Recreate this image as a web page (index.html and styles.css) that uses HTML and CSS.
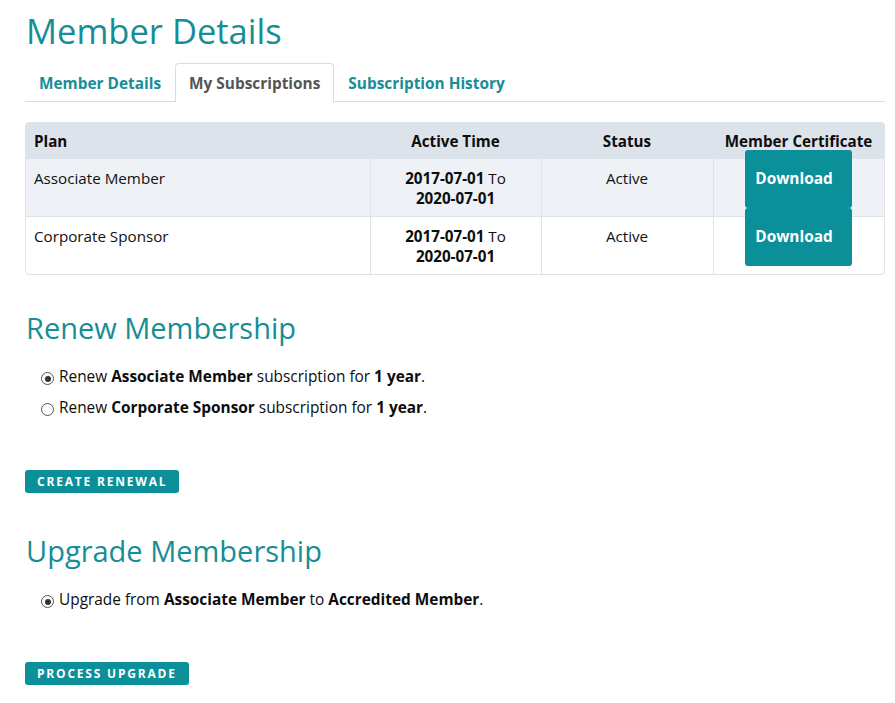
FILE: index.html
```html
<!DOCTYPE html>
<html>
<head>
<meta charset="utf-8">
<link rel="stylesheet" href="styles.css">
</head>
<body>
<div class="page">
  <h1 class="title">Member Details</h1>
  <ul class="tabs">
    <li class="tab">Member Details</li>
    <li class="tab active">My Subscriptions</li>
    <li class="tab">Subscription History</li>
  </ul>

  <div class="table-wrap">
    <table class="subs">
      <thead>
        <tr>
          <th class="c-plan">Plan</th>
          <th class="c-time">Active Time</th>
          <th class="c-status">Status</th>
          <th class="c-cert">Member Certificate</th>
        </tr>
      </thead>
      <tbody>
        <tr class="odd">
          <td class="c-plan">Associate Member</td>
          <td class="c-time"><b>2017-07-01</b> To <b>2020-07-01</b></td>
          <td class="c-status">Active</td>
          <td class="c-cert"><span class="dl">Download</span></td>
        </tr>
        <tr>
          <td class="c-plan">Corporate Sponsor</td>
          <td class="c-time"><b>2017-07-01</b> To <b>2020-07-01</b></td>
          <td class="c-status">Active</td>
          <td class="c-cert"><span class="dl">Download</span></td>
        </tr>
      </tbody>
    </table>
  </div>

  <h2 class="section renew">Renew Membership</h2>
  <div class="options">
    <label class="opt"><span class="radio on"></span> Renew <b>Associate Member</b> subscription for <b>1 year</b>.</label>
    <label class="opt"><span class="radio"></span> Renew <b>Corporate Sponsor</b> subscription for <b>1 year</b>.</label>
  </div>
  <div class="btn-row"><span class="btn">Create Renewal</span></div>

  <h2 class="section upgrade">Upgrade Membership</h2>
  <div class="options">
    <label class="opt"><span class="radio on"></span> Upgrade from <b>Associate Member</b> to <b>Accredited Member</b>.</label>
  </div>
  <div class="btn-row up"><span class="btn">Process Upgrade</span></div>
</div>
</body>
</html>
```

FILE: styles.css
```css
* { box-sizing: border-box; }
html, body { margin: 0; padding: 0; background: #fff; }
body {
  font-family: "Open Sans", "DejaVu Sans", sans-serif;
  color: #111;
  font-size: 15.2px;
}
.page { padding: 0 10px 0 25px; }
.title {
  margin: 0;
  padding-top: 8px;
  font-size: 34.5px;
  font-weight: 400;
  line-height: 45px;
  color: #178d96;
  padding-left: 1px;
}
.tabs {
  list-style: none;
  margin: 10px 0 0 0;
  padding: 0;
  display: flex;
  border-bottom: 1px solid #dcdcdc;
  height: 39px;
}
.tab {
  padding: 0 13px;
  font-weight: 700;
  font-size: 15.4px;
  line-height: 39px;
  color: #178d96;
  border: 1px solid transparent;
  border-bottom: none;
  border-radius: 4px 4px 0 0;
}
.tab.active {
  color: #555;
  border-color: #dcdcdc;
  background: #fff;
  height: 39px;
}
.table-wrap {
  margin-top: 20px;
  border: 1px solid #dfe2e6;
  border-radius: 4px;
}
.subs {
  width: 100%;
  border-collapse: collapse;
}
.subs th {
  background: #dde3ea;
  font-weight: 700;
  padding: 8px 8px;
  line-height: 20px;
  height: 36px;
  color: #0d0d0d;
}
.subs td {
  vertical-align: top;
  padding: 9px 8px 8px;
  line-height: 20px;
  height: 57px;
  border-left: 1px solid #dfe2e6;
  color: #111;
}
.subs td:first-child { border-left: none; }
.subs tbody tr + tr td { border-top: 1px solid #dfe2e6; }
.subs tr.odd td { background: #eef1f5; }
.subs b { color: #0d0d0d; white-space: nowrap; }
.c-plan { text-align: left; width: 344px; }
.c-time { text-align: center; width: 171px; }
.c-status { text-align: center; width: 172px; }
.c-cert { text-align: center; white-space: nowrap; }
.dl {
  display: inline-block;
  background: #0b8f99;
  color: #fff;
  font-weight: 700;
  font-size: 15.4px;
  padding: 19px 10px;
  border-radius: 3px;
  line-height: 20px;
  margin-top: -19px;
  width: 107px;
  text-align: left;
}
.section {
  margin: 0;
  font-weight: 400;
  font-size: 29px;
  line-height: 36px;
  color: #178d96;
  padding-left: 1px;
}
.renew { margin-top: 35px; }
.upgrade { margin-top: 40px; }
.options {
  margin-top: 20px;
  padding-left: 16px;
  display: flex;
  flex-direction: column;
  gap: 9px;
}
.opt {
  display: block;
  font-size: 15.4px;
  line-height: 22px;
  color: #0d0d0d;
}
.radio {
  width: 13px;
  height: 13px;
  border: 1px solid #555;
  border-radius: 50%;
  margin-right: 1px;
  background: #fff;
  display: inline-block;
  position: relative;
  vertical-align: -3px;
}
.radio.on::after {
  content: "";
  position: absolute;
  left: 2.5px; top: 2.5px;
  width: 6px; height: 6px;
  border-radius: 50%;
  background: #333;
}
.btn-row { margin-top: 51px; }
.btn-row.up { margin-top: 51px; }
.btn {
  display: inline-block;
  background: #0b8f99;
  color: #fff;
  font-weight: 700;
  font-size: 12px;
  letter-spacing: 1.8px;
  text-transform: uppercase;
  padding: 0 12px;
  line-height: 23px;
  border-radius: 3px;
}
```
